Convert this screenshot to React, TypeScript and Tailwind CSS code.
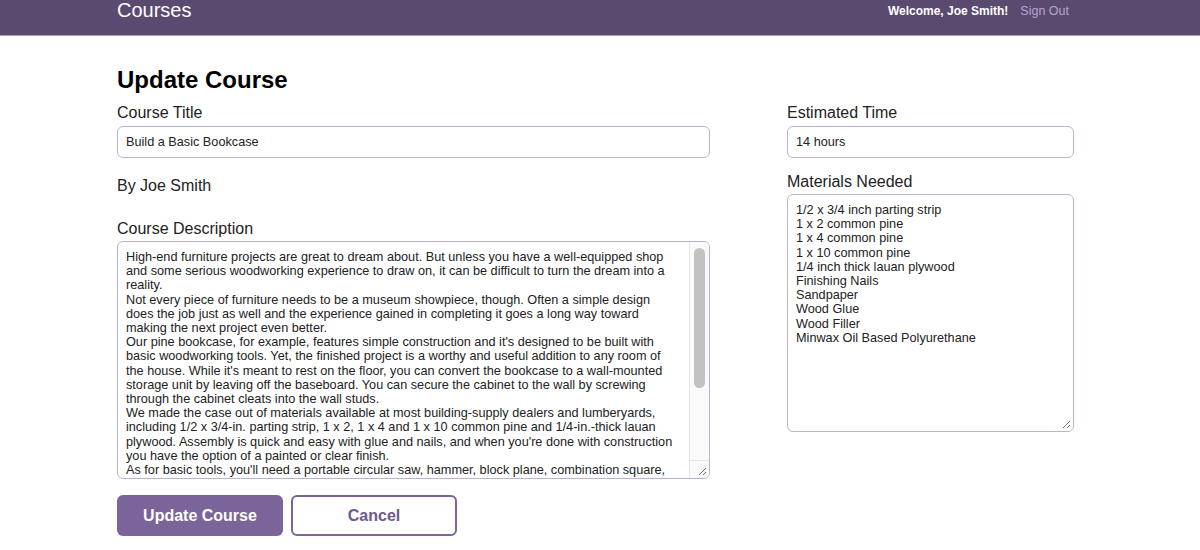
import { useState } from 'react';

const description = `High-end furniture projects are great to dream about. But unless you have a well-equipped shop and some serious woodworking experience to draw on, it can be difficult to turn the dream into a reality.
Not every piece of furniture needs to be a museum showpiece, though. Often a simple design does the job just as well and the experience gained in completing it goes a long way toward making the next project even better.
Our pine bookcase, for example, features simple construction and it's designed to be built with basic woodworking tools. Yet, the finished project is a worthy and useful addition to any room of the house. While it's meant to rest on the floor, you can convert the bookcase to a wall-mounted storage unit by leaving off the baseboard. You can secure the cabinet to the wall by screwing through the cabinet cleats into the wall studs.
We made the case out of materials available at most building-supply dealers and lumberyards, including 1/2 x 3/4-in. parting strip, 1 x 2, 1 x 4 and 1 x 10 common pine and 1/4-in.-thick lauan plywood. Assembly is quick and easy with glue and nails, and when you're done with construction you have the option of a painted or clear finish.
As for basic tools, you'll need a portable circular saw, hammer, block plane, combination square, tape measure, metal rule, two clamps, nail set and putty knife. Other supplies include glue, nails, sandpaper, wood filler and varnish or paint and shellac.`;

const materials = `1/2 x 3/4 inch parting strip
1 x 2 common pine
1 x 4 common pine
1 x 10 common pine
1/4 inch thick lauan plywood
Finishing Nails
Sandpaper
Wood Glue
Wood Filler
Minwax Oil Based Polyurethane`;

export default function App() {
  const [title, setTitle] = useState('Build a Basic Bookcase');
  const [desc, setDesc] = useState(description);
  const [time, setTime] = useState('14 hours');
  const [mats, setMats] = useState(materials);

  return (
    <div className="min-h-[550px] bg-white text-[#222] font-['Liberation_Sans',Arial,sans-serif]">
      {/* Header */}
      <header className="h-[36px] bg-[#5b4a6f] border-b border-[#a99bc0] flex items-start justify-between pl-[117px] pr-[131px]">
        <span className="text-white text-[20px] leading-[20px]">Courses</span>
        <div className="flex items-center gap-[12px] pt-[3px] text-[12.5px] leading-[16px]">
          <span className="text-white font-bold text-[12px]">Welcome, Joe Smith!</span>
          <a href="#" className="text-[#b5a5cf]">Sign Out</a>
        </div>
      </header>

      {/* Form */}
      <div className="pl-[117px]">
        <h1 className="mt-[29px] text-[24px] leading-[30px] font-bold text-black">Update Course</h1>
        <div className="flex gap-[77px]">
          {/* Left column */}
          <div className="w-[593px]">
            <label className="block mt-[8px] text-[16px] leading-[20px]">Course Title</label>
            <input
              value={title}
              onChange={(e) => setTitle(e.target.value)}
              className="mt-[3px] block w-full h-[32px] rounded-[6px] border border-[#bdb2d1] px-[8px] text-[12.7px] text-[#222] outline-none"
            />
            <p className="mt-[18px] text-[16px] leading-[20px]">By Joe Smith</p>
            <label className="block mt-[23px] text-[16px] leading-[20px]">Course Description</label>
            <div className="relative mt-[2px]">
              <textarea
                value={desc}
                onChange={(e) => setDesc(e.target.value)}
                className="block w-full h-[238px] rounded-[6px] border border-[#bdb2d1] pl-[8px] pr-[28px] pt-[8px] text-[12.7px] leading-[14.2px] text-[#222] outline-none resize-none overflow-hidden"
              />
              {/* scrollbar */}
              <div className="absolute right-[1px] top-[1px] bottom-[1px] w-[20px] bg-[#fafafa] border-l border-[#e6e6e6] rounded-tr-[5px] rounded-br-[5px]">
                <div className="absolute left-[4px] top-[6px] w-[11px] h-[140px] rounded-full bg-[#c2c2c2]" />
                <div className="absolute left-0 right-0 bottom-0 h-[18px] border-t border-[#e6e6e6]" />
              </div>
              <svg className="absolute right-[3px] bottom-[3px]" width="10" height="10" viewBox="0 0 10 10">
                <path d="M9 2 L2 9 M9 6 L6 9" stroke="#777" strokeWidth="1" fill="none" />
              </svg>
            </div>
            <div className="flex gap-[8px] mt-[16px]">
              <button className="w-[166px] h-[41px] rounded-[6px] bg-[#7b6499] text-white font-bold text-[16px]">
                Update Course
              </button>
              <button className="w-[166px] h-[41px] rounded-[6px] border-2 border-[#7b6499] bg-white text-[#6e5a8c] font-bold text-[16px]">
                Cancel
              </button>
            </div>
          </div>

          {/* Right column */}
          <div className="w-[287px]">
            <label className="block mt-[8px] text-[16px] leading-[20px]">Estimated Time</label>
            <input
              value={time}
              onChange={(e) => setTime(e.target.value)}
              className="mt-[3px] block w-full h-[32px] rounded-[6px] border border-[#bdb2d1] px-[8px] text-[12.7px] text-[#222] outline-none"
            />
            <label className="block mt-[14px] text-[16px] leading-[20px]">Materials Needed</label>
            <div className="relative mt-[2px]">
              <textarea
                value={mats}
                onChange={(e) => setMats(e.target.value)}
                className="block w-full h-[238px] rounded-[6px] border border-[#bdb2d1] px-[8px] pt-[8px] text-[12.7px] leading-[14.2px] text-[#222] outline-none resize-none overflow-hidden"
              />
              <svg className="absolute right-[3px] bottom-[3px]" width="10" height="10" viewBox="0 0 10 10">
                <path d="M9 2 L2 9 M9 6 L6 9" stroke="#777" strokeWidth="1" fill="none" />
              </svg>
            </div>
          </div>
        </div>
      </div>
    </div>
  );
}
